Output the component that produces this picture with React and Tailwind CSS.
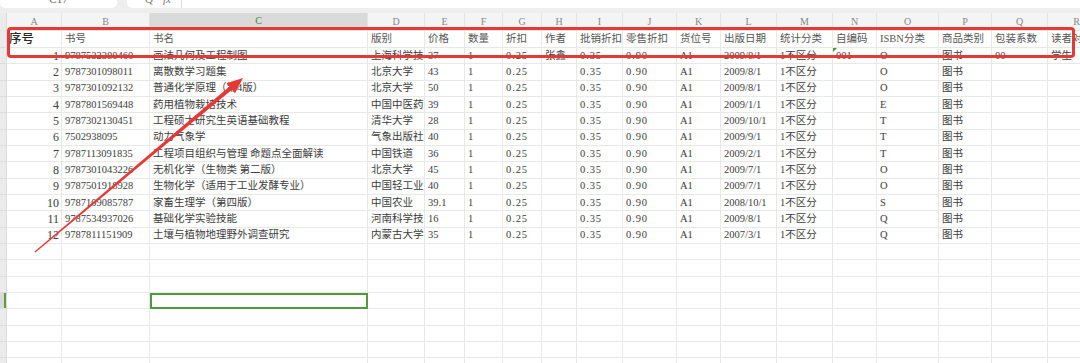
import React from 'react'

const COLS = [
  { k: 'A', w: 'w-[55px]' },
  { k: 'B', w: 'w-[88px]' },
  { k: 'C', w: 'w-[218px]' },
  { k: 'D', w: 'w-[57px]' },
  { k: 'E', w: 'w-[40px]' },
  { k: 'F', w: 'w-[38px]' },
  { k: 'G', w: 'w-[39px]' },
  { k: 'H', w: 'w-[35px]' },
  { k: 'I', w: 'w-[46px]' },
  { k: 'J', w: 'w-[54px]' },
  { k: 'K', w: 'w-[44px]' },
  { k: 'L', w: 'w-[56px]' },
  { k: 'M', w: 'w-[56px]' },
  { k: 'N', w: 'w-[44px]' },
  { k: 'O', w: 'w-[62px]' },
  { k: 'P', w: 'w-[53px]' },
  { k: 'Q', w: 'w-[56px]' },
  { k: 'R', w: 'w-[58px]' },
]

const HEAD = ['序号', '书号', '书名', '版别', '价格', '数量', '折扣', '作者', '批销折扣', '零售折扣', '货位号', '出版日期', '统计分类', '自编码', 'ISBN分类', '商品类别', '包装系数', '读者对象']

// [isbn, title, press, price, date, cls]
const BOOKS = [
  ['9787532380460', '画法几何及工程制图', '上海科学技术', '37', '2009/8/1', 'O'],
  ['9787301098011', '离散数学习题集', '北京大学', '43', '2009/8/1', 'O'],
  ['9787301092132', '普通化学原理（第4版）', '北京大学', '50', '2009/8/1', 'O'],
  ['9787801569448', '药用植物栽培技术', '中国中医药', '39', '2009/1/1', 'E'],
  ['9787302130451', '工程硕士研究生英语基础教程', '清华大学', '28', '2009/10/1', 'T'],
  ['7502938095', '动力气象学', '气象出版社', '40', '2009/9/1', 'T'],
  ['9787113091835', '工程项目组织与管理 命题点全面解读', '中国铁道', '36', '2009/2/1', 'T'],
  ['9787301043226', '无机化学（生物类 第二版）', '北京大学', '45', '2009/7/1', 'O'],
  ['9787501918928', '生物化学（适用于工业发酵专业）', '中国轻工业', '40', '2009/7/1', 'O'],
  ['9787109085787', '家畜生理学（第四版）', '中国农业', '39.1', '2008/10/1', 'S'],
  ['9787534937026', '基础化学实验技能', '河南科学技', '16', '2009/8/1', 'Q'],
  ['9787811151909', '土壤与植物地理野外调查研究', '内蒙古大学', '35', '2007/3/1', 'Q'],
]

function rowCells(b, i) {
  const first = i === 0
  return [
    String(i + 1), b[0], b[1], b[2], b[3], '1', '0.25', first ? '张鑫' : '', '0.35', '0.90', 'A1', b[4], '1不区分',
    first ? '001' : '', b[5], '图书', first ? '00' : '', first ? '学生' : '',
  ]
}

const EMPTY_ROWS = 8
const SELECTED = 15
const SPACED = [6, 8, 9] // 折扣 columns, drawn wide like SimSun

export default function App() {
  const rows = [...BOOKS.map(rowCells), ...Array.from({ length: EMPTY_ROWS }, () => Array(18).fill(''))]

  return (
    <div className="relative w-[1080px] h-[363px] overflow-hidden bg-white font-['Liberation_Serif','Noto_Sans_CJK_SC',serif] text-[#3c3c3c]">
      {/* toolbar, cut at the top */}
      <div className="flex h-[13px] bg-[#eeeeee]">
        <div className="w-[117px] h-[8px] bg-white rounded-b-[5px] overflow-hidden flex justify-center">
          <span className="-mt-[7px] text-[11px] leading-[12px] text-[#666]">C17</span>
        </div>
        <div className="ml-[10px] flex-1 h-[8px] bg-white rounded-bl-[5px] overflow-hidden flex items-start">
          <span className="ml-[18px] -mt-[7px] text-[11px] leading-[12px] text-[#777]">Q</span>
          <span className="ml-[10px] -mt-[7px] text-[11px] leading-[12px] italic text-[#777]">fx</span>
          <div className="ml-[10px] w-px h-[8px] bg-[#dddddd]" />
        </div>
      </div>

      {/* column letters */}
      <div className="flex h-[18px] bg-[#f4f4f4] border-b border-[#e2e2e2]">
        <div className="w-[7px] shrink-0 bg-[#ebebeb] border-r border-[#dcdcdc]" />
        {COLS.map(c => (
          <div
            key={c.k}
            className={`${c.w} shrink-0 flex items-center justify-center text-[10px] border-r border-[#e4e4e4] ${c.k === 'C' ? 'bg-[#dadada] text-[#3f8f3f] border-b-2 border-b-[#5f9a3c]' : 'text-[#888]'}`}
          >
            {c.k}
          </div>
        ))}
      </div>

      {/* header row */}
      <div className="flex h-[17px]">
        <div className="w-[7px] shrink-0 bg-[#ebebeb] border-r border-b border-[#dcdcdc]" />
        {COLS.map((c, j) => (
          <div key={c.k} className={`${c.w} shrink-0 flex items-center overflow-hidden whitespace-nowrap border-r border-b border-[#e8e8e8] ${j === 0 ? 'pl-[2px] text-[12.5px] font-medium text-[#2a2a2a]' : 'pl-[3px] text-[10.5px] text-[#555]'}`}>
            {HEAD[j]}
          </div>
        ))}
      </div>

      {/* data rows */}
      {rows.map((r, i) => (
        <div key={i} className="flex h-[16.33px]">
          <div className={`w-[7px] shrink-0 border-r border-b border-[#dcdcdc] flex justify-end ${i === SELECTED ? 'bg-[#d9d9d9]' : 'bg-[#ebebeb]'}`}>
            {i === SELECTED && <div className="w-[2px] h-full bg-[#5f9a3c]" />}
          </div>
          {COLS.map((c, j) => {
            const sel = j === 2 && i === SELECTED
            return (
              <div
                key={c.k}
                className={`${c.w} shrink-0 relative flex items-center overflow-hidden whitespace-nowrap ${sel ? 'border-2 border-[#4f9a3a]' : 'border-r border-b border-[#e8e8e8]'} ${j === 0 ? 'justify-end pr-[2px] text-[12px]' : 'pl-[3px] text-[10.5px]'} ${SPACED.includes(j) ? 'tracking-[0.9px]' : ''}`}
              >
                {r[j]}
                {i === 0 && j === 13 && (
                  <div className="absolute left-0 top-0 w-0 h-0 border-t-[4px] border-t-[#3f9a3f] border-r-[4px] border-r-transparent" />
                )}
              </div>
            )
          })}
        </div>
      ))}

      {/* annotation overlay */}
      <div className="absolute left-[7px] top-[27px] w-[1068px] h-[31px] border-[3px] border-[#e53935] rounded-[4px] pointer-events-none" />
      <svg className="absolute left-0 top-0 pointer-events-none" width="1080" height="363" viewBox="0 0 1080 363">
        <polygon points="35.4,252.5 34.6,251.5 229.4,86.4 232.2,89.6" fill="#e53935" />
        <polygon points="243,78 235,93.3 226.5,83.2" fill="#e53935" />
      </svg>
    </div>
  )
}
